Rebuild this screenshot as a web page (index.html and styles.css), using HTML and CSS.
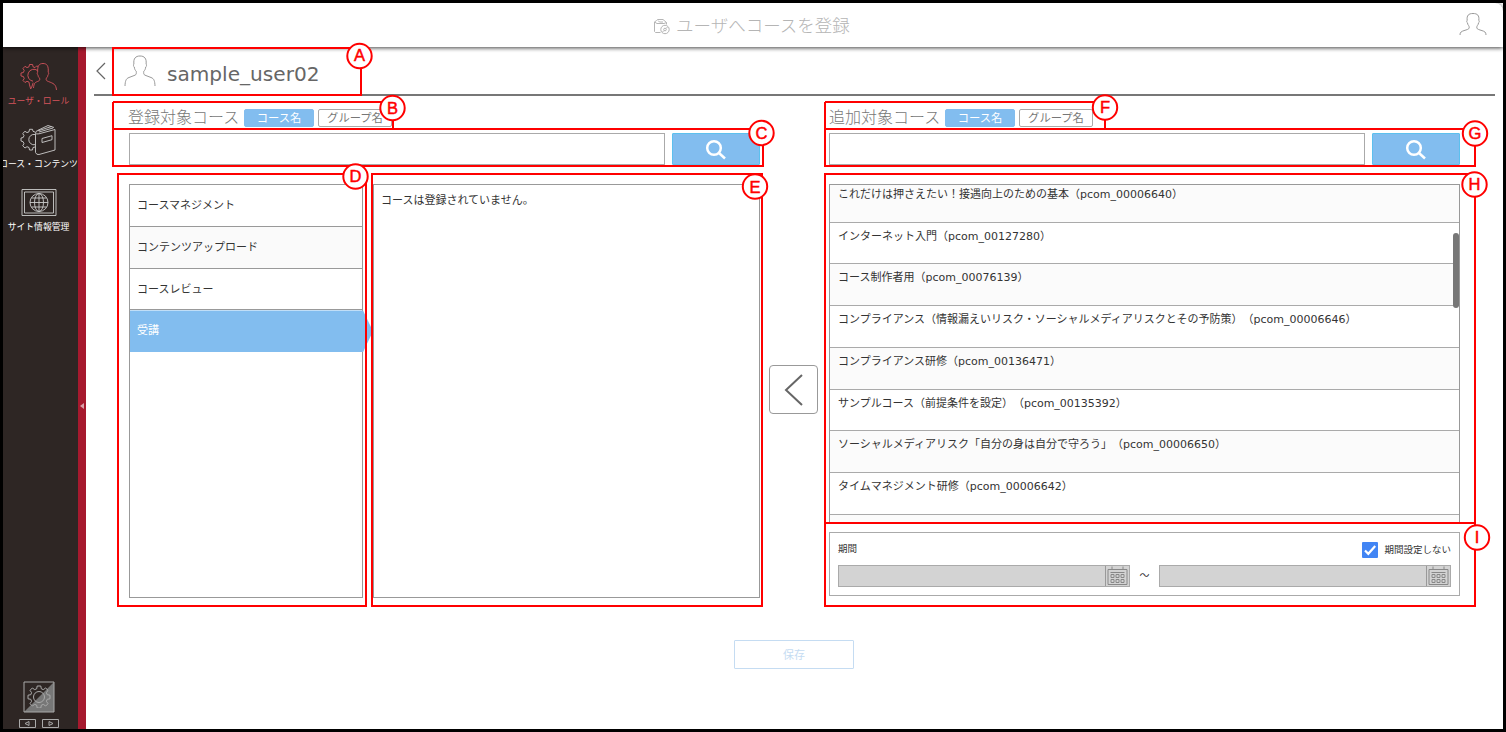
FILE: index.html
```html
<!DOCTYPE html>
<html lang="ja">
<head>
<meta charset="utf-8">
<title>ユーザへコースを登録</title>
<link rel="stylesheet" href="styles.css">
</head>
<body>
<svg class="defs" width="0" height="0">
  <defs>
    <symbol id="gear" viewBox="0 0 24 24">
      <path d="M10.2 2h3.600l.5 2.800 2 .8 2.400-1.600 2.300 2.300-1.600 2.400.8 2 2.800.5v3.600l-2.800.5-.8 2 1.600 2.400-2.300 2.300-2.400-1.600-2 .8-.5 2.800h-3.600l-.5-2.800-2-.8-2.400 1.600L3 19.700l1.600-2.400-.8-2L1 14.800v-3.600l2.800-.5.8-2L3 6.300 5.300 4l2.400 1.600 2-.8z"/>
      <circle cx="12" cy="13" r="5.500"/>
    </symbol>
    <symbol id="person" viewBox="0 0 32 32">
      <path d="M1 31c.2-5 1-7.500 4-8.500l6-2.300c1.400-.6 1.500-2 1.200-4-1.200-1-1.700-2.400-1.900-4.200-1-.3-1-2.500-.4-3C9.300 3.500 11.500 1 16 1s6.700 2.500 6.100 8c.6.500.6 2.700-.4 3-.2 1.800-.7 3.200-1.900 4.200-.3 2-.2 3.400 1.200 4l6 2.300c3 1 3.800 3.500 4 8.500"/>
    </symbol>
    <symbol id="search" viewBox="0 0 22 22">
      <circle cx="9" cy="9" r="6.800"/><path d="M14 14l6 5.500"/>
    </symbol>
    <symbol id="calendar" viewBox="0 0 22 20">
      <path d="M1.500 3.500h19v15h-19zM5.500.5v3M16.500.5v3M4 6.500h14"/>
      <path d="M4.500 8.500h3v3h-3zM9.500 8.500h3v3h-3zM14.500 8.500h3v3h-3zM4.500 13.500h3v3h-3zM9.500 13.500h3v3h-3zM14.500 13.500h3v3h-3z"/>
    </symbol>
  </defs>
</svg>
<div class="app">
  <header class="topbar">
    <svg class="title-icon" viewBox="0 0 16 16"><path d="M6.500 13.500H1.500l-1-1V3l2-1.500 1-1H9l3.500 3v2M.5 3l2.500 1.500h7l2.500-1M4 1.500l1.500 1.500H9"/><circle cx="11" cy="10.500" r="4.200"/><circle cx="11" cy="10.500" r="1.300"/><path d="M8.500 13l1.500-1.500M12 9.500L13.500 8"/></svg>
    <h1 class="title">ユーザへコースを登録</h1>
    <svg class="account" viewBox="0 0 28 24"><path d="M1 22c0-3 1.500-3.500 4-4.400 3-.9 5-1.400 5.200-2.700.1-1-.2-1.800-.6-2.400-.7-.8-1-1.500-1.100-2.600-.9-.4-1-2-.3-2.600C7.600 2.500 9.500.5 14 .5s6.400 2 5.800 6.800c.7.6.6 2.200-.3 2.600-.1 1.100-.4 1.800-1.100 2.600-.4.600-.7 1.400-.6 2.400.2 1.300 2.200 1.800 5.200 2.700 2.500.9 4 1.400 4 4.400"/></svg>
  </header>
  <div class="body">
    <nav class="sidebar">
      <a class="nav-item active">
        <svg viewBox="0 0 38 32"><path d="M18 5.500l-1.300-.6-1.700 1.700-2-.8-.4-2.300H9.500L9 5.800l-2 .8-2-1.300L3 7.500l1.200 2-.8 2-2.400.5v3l2.400.5.800 2-1.200 2 2 2 2-1.200 2 .8.500 2.800 1.200 4 1-1.700 1.500-4.500M17.500 9.500a6 6 0 1 0-4.500 10.700"/><path d="M13.500 27c.5-5 1.500-5.500 4-6.500 2-.8 2.500-1.300 2.200-3.200-1.300-1-1.600-2-1.700-3.500-1-.4-1-2.200-.3-2.600C17.300 5 19 2.500 23 2.500s5.700 2.500 5.200 8.700c.7.4.7 2.200-.3 2.600-.1 1.500-.4 2.500-1.700 3.500-.3 1.900.2 2.400 2.200 3.200 5 2 7.500 2.500 8.100 8.500"/></svg>
        <span>ユーザ・ロール</span>
      </a>
      <a class="nav-item">
        <svg viewBox="0 0 38 32"><path d="M15 23l-2 .5-.5 2.500h-3L9 23.500l-2-.8-2 1.300-2.300-2.200 1.300-2-.8-2L1 17v-3l2.200-.5.800-2-1.300-2L5 7.300l2 1.300 2-.8.500-2.500h3l.5 2 2 .8M15 10.500a5.200 5.200 0 1 0 0 10.200"/><path d="M15.500 28.500v-19q0-2.500 2-3L28 1.500l6 2M15.500 28.500q1 2.500 3.500 2L35 26V5.500L19 9.800q-3 .6-3.300-.6M17.500 7l14-4.500M19 8l14-4M22 14.500l10-2.800v4l-10 2.800z"/></svg>
        <span>コース・コンテンツ</span>
      </a>
      <a class="nav-item">
        <svg viewBox="0 0 38 32"><path d="M2 2.500h34v26H2zM4.500 5h29v21h-29z"/><circle cx="19" cy="15.500" r="9"/><ellipse cx="19" cy="15.500" rx="4.500" ry="9"/><path d="M19 6.500v18M10 15.500h18M11.500 11h15M11.500 20h15"/></svg>
        <span>サイト情報管理</span>
      </a>
      <div class="nav-tools">
        <svg class="config" viewBox="0 0 32 32"><path class="shade" d="M1 31L31 1v30z"/><path d="M1 1h30v30H1z"/><use href="#gear" x="4" y="3" width="24" height="24"/></svg>
        <svg class="steps" viewBox="0 0 40 10"><path d="M.5.5h16v8H.5zM23.500.5h16v8h-16zM10 2.500v4l-4-2zM30 2.500v4l4-2z"/></svg>
      </div>
    </nav>
    <div class="rail"><span class="rail-arrow"></span></div>
    <main class="main">
      <div class="user-head">
        <svg class="back" viewBox="0 0 10 18"><path d="M9 1L1 9l8 8"/></svg>
        <svg class="avatar"><use href="#person"/></svg>
        <h2 class="user-name">sample_user02</h2>
      </div>
      <div class="columns">
        <section class="col">
          <div class="col-head"><h3>登録対象コース</h3><button class="tab on">コース名</button><button class="tab">グループ名</button></div>
          <div class="search"><input type="text"><button><svg><use href="#search"/></svg></button></div>
          <div class="lists">
            <ul class="roles">
              <li>コースマネジメント</li>
              <li class="alt">コンテンツアップロード</li>
              <li>コースレビュー</li>
              <li class="selected">受講</li>
            </ul>
            <div class="registered">コースは登録されていません。</div>
          </div>
        </section>
        <button class="move"><svg viewBox="0 0 20 32"><path d="M18 1L2 16l16 15"/></svg></button>
        <section class="col available">
          <div class="col-head"><h3>追加対象コース</h3><button class="tab on">コース名</button><button class="tab">グループ名</button></div>
          <div class="search"><input type="text"><button><svg><use href="#search"/></svg></button></div>
          <div class="courses-wrap">
            <ul class="courses">
              <li>これだけは押さえたい！接遇向上のための基本（pcom_00006640）</li>
              <li>インターネット入門（pcom_00127280）</li>
              <li>コース制作者用（pcom_00076139）</li>
              <li>コンプライアンス（情報漏えいリスク・ソーシャルメディアリスクとその予防策）（pcom_00006646）</li>
              <li>コンプライアンス研修（pcom_00136471）</li>
              <li>サンプルコース（前提条件を設定）（pcom_00135392）</li>
              <li>ソーシャルメディアリスク「自分の身は自分で守ろう」（pcom_00006650）</li>
              <li>タイムマネジメント研修（pcom_00006642）</li>
              <li></li>
            </ul>
            <span class="scroll-thumb"></span>
          </div>
          <div class="period">
            <div class="period-head"><span>期間</span><label><svg viewBox="0 0 16 16"><path d="M3 8.500l3.300 3.300L13.200 4"/></svg>期間設定しない</label></div>
            <div class="period-row">
              <div class="date"><svg><use href="#calendar"/></svg></div>
              <span class="tilde">～</span>
              <div class="date"><svg><use href="#calendar"/></svg></div>
            </div>
          </div>
        </section>
      </div>
      <button class="save">保存</button>
    </main>
  </div>
  <svg class="callouts" width="1506" height="732" viewBox="0 0 1506 732">
    <g class="frames">
      <path d="M113 48h248v47H113z"/>
      <path d="M113 102h280v27M113 102v27"/>
      <path d="M113 129h650v37H113z"/>
      <path d="M118 174h248v432H118z"/>
      <path d="M372 174h390v432H372z"/>
      <path d="M825 102h280v27M825 102v27"/>
      <path d="M825 129h650v37H825z"/>
      <path d="M825 174h650v349H825z"/>
      <path d="M825 523h650v83H825z"/>
    </g>
    <g class="badges">
      <circle cx="359.500" cy="56" r="12.200"/><circle cx="392.500" cy="108" r="12.200"/><circle cx="761.500" cy="133" r="12.200"/>
      <circle cx="355.500" cy="176.500" r="12.200"/><circle cx="755" cy="186.500" r="12.200"/><circle cx="1105" cy="107.500" r="12.200"/>
      <circle cx="1475" cy="133.500" r="12.200"/><circle cx="1474.500" cy="184.500" r="12.200"/><circle cx="1477" cy="537.500" r="12.200"/>
    </g>
    <g class="letters">
      <text x="359.500" y="61">A</text><text x="392.500" y="113.500">B</text><text x="761.500" y="138.500">C</text>
      <text x="355.500" y="182">D</text><text x="755" y="192.500">E</text><text x="1105" y="112.500">F</text>
      <text x="1475" y="138.500">G</text><text x="1474.500" y="189.500">H</text><text x="1477" y="542.500">I</text>
    </g>
  </svg>
</div>
</body>
</html>
```
FILE: styles.css
```css
* { box-sizing: border-box; }
html, body { margin: 0; padding: 0; }
body {
  width: 1506px; height: 732px; overflow: hidden; background: #000;
  font-family: "Noto Sans", "Noto Sans CJK JP", sans-serif;
  font-size: 11px; color: #333; text-spacing-trim: space-all;
}
h1, h2, h3, ul { margin: 0; padding: 0; list-style: none; }
h1, h2, h3 { font-weight: 300; }
button { font: inherit; padding: 0; margin: 0; border-radius: 1px; }
svg { display: block; fill: none; stroke: currentColor; flex: none; }
.defs { position: absolute; }

.app {
  position: relative; width: 1506px; height: 732px; border: 3px solid #000;
  background: #fff; display: flex; flex-direction: column;
}
.topbar {
  height: 44px; flex: none; display: flex; align-items: center; position: relative; z-index: 1;
  background: #fff; border-top-right-radius: 8px; box-shadow: 0 1px 4px rgba(0,0,0,.75);
  padding: 0 16px 0 651px; color: #b5b5b5;
}
.title-icon { width: 16px; height: 16px; margin-top: 4px; }
.title { font-size: 17.500px; line-height: 24px; margin: 0 0 0 6px; white-space: nowrap; }
.account { width: 28px; height: 24px; margin: 0 0 0 auto; color: #999; }

.body { flex: 1; display: flex; min-height: 0; }
.sidebar {
  width: 75px; background: #2e2624; color: #fff; display: flex; flex-direction: column;
  align-items: center; overflow: hidden; padding: 14px 4px 0 0;
}
.nav-item {
  height: 63px; flex: none; display: flex; flex-direction: column; align-items: center;
  font-size: 8.800px; line-height: 13px; white-space: nowrap;
}
.nav-item svg { width: 38px; height: 32px; margin-bottom: 2px; color: #ccc; stroke-width: .9; }
.nav-item.active, .nav-item.active svg { color: #d4545c; }
.nav-tools { margin-top: auto; display: flex; flex-direction: column; align-items: center; gap: 6px; color: #aaa; }
.config { width: 32px; height: 32px; }
.config .shade { fill: #777; stroke: none; }
.steps { width: 40px; height: 10px; }
.rail { width: 8px; background: #a6192e; display: flex; align-items: center; padding: 35px 0 0 2px; }
.rail-arrow { border: 3px solid transparent; border-right: 4px solid #d9a0a8; border-left: 0; }

.main { flex: 1; display: flex; flex-direction: column; min-width: 0; padding: 0 8px; }
.user-head { height: 49px; flex: none; border-bottom: 2px solid #777; display: flex; padding: 7px 0 0 2px; color: #666; }
.back { width: 10px; height: 18px; margin-top: 8px; stroke-width: 1.2; }
.avatar { width: 32px; height: 32px; margin: 1px 0 0 18px; color: #999; }
.user-name { font: 20.100px/24px "DejaVu Sans", sans-serif; margin: 8px 0 0 11px; }

.columns { display: flex; padding: 11px 0 0 35px; height: 502px; flex: none; }
.col { width: 631px; display: flex; flex-direction: column; flex: none; }
.col-head { height: 20px; display: flex; align-items: center; margin-left: -1px; }
.col-head h3 { font-size: 16px; line-height: 20px; color: #777; width: 112px; white-space: nowrap; }
.available .col-head { margin-left: 0; }
.tab { height: 18px; width: 74px; margin-top: 2px; border: 1px solid #aaa; border-radius: 2px; background: #fff; color: #777; line-height: 16px; font-size: 11.300px; white-space: nowrap; }
.tab.on { width: 70px; margin: 2px 4px 0 4px; background: #82bdef; border-color: #82bdef; color: #fff; }
.search { display: flex; justify-content: space-between; margin-top: 6px; height: 32px; }
.search input { width: 536px; border: 1px solid #aaa; padding: 0; }
.search button { width: 88px; background: #82bdef; border: 1px solid #5cc0ee; color: #fff; display: flex; justify-content: center; align-items: center; }
.search svg { width: 22px; height: 22px; margin-top: 2px; stroke-width: 2.500; }

.lists { display: flex; gap: 10px; margin-top: 19px; height: 414px; font-family: "DejaVu Sans", "Noto Sans CJK JP", sans-serif; }
.roles { width: 234px; border: 1px solid #999; }
.roles li { height: 41.800px; border-bottom: 1px solid #999; padding-left: 7px; line-height: 42px; }
.roles .alt { background: #fafafa; }
.roles .selected {
  width: 243px; border: 0; color: #fff; background: #82bdef; position: relative; z-index: 1;
  clip-path: polygon(0 0, 233px 0, 243px 50%, 233px 100%, 0 100%);
}
.registered { width: 387px; border: 1px solid #999; padding: 6px 7px; line-height: 20px; }
.move {
  width: 49px; height: 49px; margin: 258px 11px 0 9px; border: 1px solid #999; border-radius: 4px;
  background: #fff; display: flex; align-items: center; justify-content: center; color: #666; flex: none;
}
.move svg { width: 20px; height: 32px; stroke-width: 2; }

.courses-wrap { position: relative; height: 339px; margin-top: 19px; flex: none; }
.courses { height: 339px; overflow: hidden; border: 1px solid #999; border-bottom: 0; font-family: "DejaVu Sans", "Noto Sans CJK JP", sans-serif; }
.courses li { height: 41.750px; border-bottom: 1px solid #aaa; padding-left: 8px; line-height: 28px; white-space: nowrap; }
.courses li:first-child { height: 37.500px; line-height: 20px; }
.courses li:nth-child(odd) { background: #fbfbfb; }
.scroll-thumb { position: absolute; right: 1px; top: 49px; width: 6px; height: 75px; border-radius: 3px; background: #777; }
.period { margin-top: 9px; height: 64px; border: 1px solid #aaa; padding: 7px 8px; }
.period-head { display: flex; justify-content: space-between; height: 18px; line-height: 18px; font-size: 9.500px; }
.period-head label { display: flex; align-items: center; gap: 6px; padding-top: 2px; }
.period-head svg { width: 16px; height: 16px; background: #4285f4; color: #fff; stroke-width: 2.200; border-radius: 1px; }
.period-row { display: flex; justify-content: space-between; align-items: center; margin-top: 7px; height: 22px; }
.tilde { font-size: 10px; padding-bottom: 4px; }
.date { width: 292px; height: 22px; border: 1px solid #aaa; background: #d3d3d3; display: flex; justify-content: flex-end; color: #888; }
.date svg { width: 24px; height: 20px; border-left: 1px solid #999; }
.save { width: 120px; height: 29px; flex: none; margin: 42px 0 0 640px; padding-bottom: 2px; border: 1px solid #c5dcf2; background: #fff; color: #c5dcf2; }

.callouts { position: absolute; left: -3px; top: -3px; z-index: 2; }
.frames { stroke: #f00; stroke-width: 2; }
.badges { stroke: #f00; stroke-width: 2; fill: #fff; }
.letters { fill: #f00; stroke: #f00; stroke-width: .5; font: 16.500px "Liberation Sans", Arial, sans-serif; text-anchor: middle; }
```
